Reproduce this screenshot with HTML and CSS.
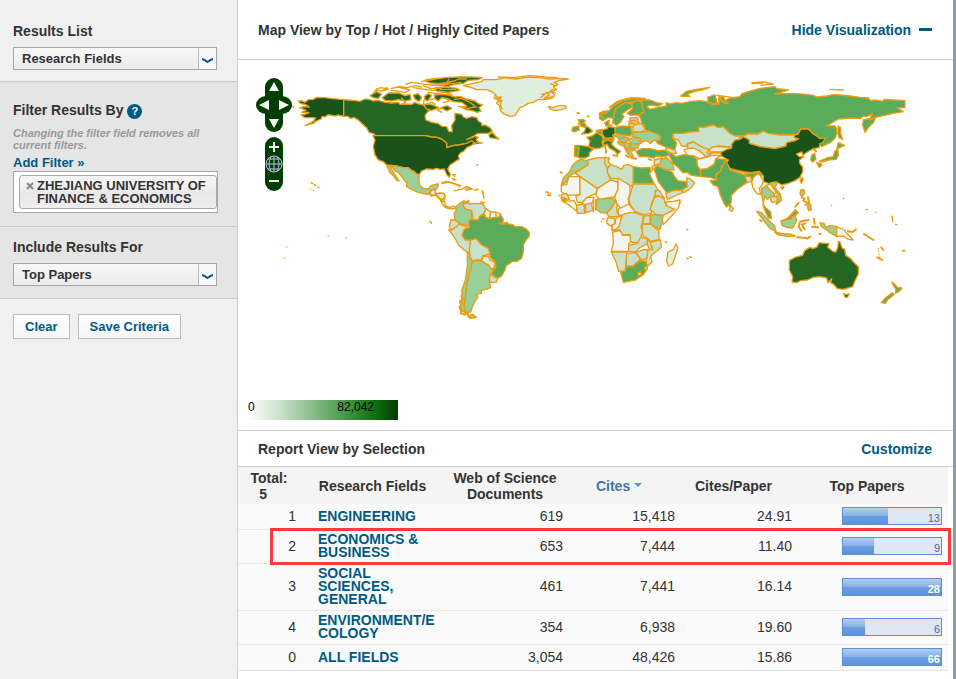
FILE: index.html
```html
<!DOCTYPE html>
<html lang="en">
<head>
    <meta charset="UTF-8">
    <meta name="viewport" content="width=device-width, initial-scale=1.0">
    <title>Top Papers by Research Field</title>
    <link rel="stylesheet" href="styles.css">
</head>
<body>
    <div class="page">
        <aside class="sidebar">
            <section class="panel">
                <label class="panel-title" for="resultsList">Results List</label>
                <div class="select-box">
                    <select id="resultsList"><option>Research Fields</option></select>
                    <svg class="chevron" viewBox="0 0 11 6"><path d="M0 1Q2 1.500 5.500 4Q9 1.500 11 1"/></svg>
                </div>
            </section>

            <section class="panel shaded filter">
                <h2 class="panel-title">Filter Results By <button class="help" aria-label="Help">?</button></h2>
                <p class="note">Changing the filter field removes all current filters.</p>
                <a class="add-filter" href="#">Add Filter »</a>
                <div class="filter-list">
                    <div class="tag">
                        <button class="remove" aria-label="Remove filter"><svg viewBox="0 0 8 8"><path d="M1 1L7 7M7 1L1 7"/></svg></button>
                        <span>ZHEJIANG UNIVERSITY OF FINANCE &amp; ECONOMICS</span>
                    </div>
                </div>
            </section>

            <section class="panel shaded include">
                <label class="panel-title" for="includeFor">Include Results For</label>
                <div class="select-box">
                    <select id="includeFor"><option>Top Papers</option></select>
                    <svg class="chevron" viewBox="0 0 11 6"><path d="M0 1Q2 1.500 5.500 4Q9 1.500 11 1"/></svg>
                </div>
            </section>

            <div class="actions">
                <button class="btn">Clear</button>
                <button class="btn">Save Criteria</button>
            </div>
        </aside>

        <main class="content">
            <header class="view-header">
                <h1>Map View by Top / Hot / Highly Cited Papers</h1>
                <a class="hide-link" href="#">Hide Visualization <span class="minus"></span></a>
            </header>

            <div class="map">
                <svg class="world" viewBox="238 60 715 370" role="img" aria-label="World map">
                    <!-- North America -->
                    <g class="land" transform="translate(245 65) scale(.3333)">
                        <path class="l7" d="M160 108L172 108L180 112L190 104L205 103L215 97L240 98L262 101L296 104V154L280 150L270 153L250 149L240 156L232 154L228 162L216 167L205 175L180 182L198 173L207 167L212 159L200 158L180 158L168 150L186 146L192 142L170 142L183 136L165 128L176 125L193 126L182 119L166 115Z"/>
                        <path class="l6" d="M296 104L330 107L345 109L360 102L375 104L385 108L400 106L420 112L440 114L460 112L465 118L480 117L500 118L510 112L518 116L535 120L548 119L560 124L565 130L548 140L540 152L542 165L560 172L580 176L590 184L605 185L612 200L622 200L620 182L630 165V145L650 148L655 156L665 160L680 155L695 158L700 168L710 174V182L720 180L735 188L742 198L730 205L710 205L697 206L685 214L665 224L690 214L700 217L693 224L701 232L690 236L680 228L665 235L640 240L625 242L605 248V235L590 222L575 217L560 216L540 212H393L385 206L372 202L365 188L352 177L340 165L328 158L316 160L308 154L296 154Z"/>
                        <path class="l6" d="M732 210L742 202L752 214L762 222L748 220L734 218ZM678 240L700 232L712 234"/>
                        <path class="l7" d="M393 212H540L560 216L575 217L590 222L605 235V248L625 242L640 240L665 235L680 228L688 234L678 242L665 248L655 260L648 262L640 272L643 282L635 287L615 300L608 312L616 328L613 337L606 330L598 312L585 313L575 310L565 313L545 312L530 318L522 330L514 326L505 318L500 317L490 308L475 308L450 302L425 300L415 290L400 285L390 270L385 245L390 225L384 212Z"/>
                        <path class="l4" d="M440 304L450 302L475 308L490 308L500 317L505 318L514 326L522 330V350L526 364L535 370L550 372L558 362L580 356L578 368L570 375L555 376L553 386L545 388L520 382L500 373L485 365V354L474 340L460 322L450 318Z"/>
                        <path class="l4" d="M425 300L437 304L443 320L455 336L462 348L455 346L445 332L434 322Z"/>
                        <path class="l2" d="M553 388L560 377L568 376L572 388L560 394ZM570 390L585 384L598 386L600 400L594 414L584 402Z"/>
                        <path d="M385 85L395 72L408 68L430 72L410 78L395 76M410 78L425 68M440 70L460 66L495 75L480 82L440 76M460 64L485 68L512 62L530 66M482 58L500 52L540 58L560 60L600 62M505 68L530 72L565 76L600 73M530 50L545 44L580 40L600 44L620 38L640 40"/>
                        <path class="l6" d="M375 92L395 80L410 88L400 100L385 98ZM412 98L430 84L462 84L480 92L495 88L498 104L480 108L460 104L440 108L420 106ZM505 90L520 86L530 98L522 110L510 102ZM538 94L550 86L560 92L548 108L540 104ZM535 118L558 118L582 128L560 136L545 132Z"/>
                        <path class="l6" d="M540 48L570 42L600 38L640 36L680 36L712 38L700 44L670 46L655 55L630 58L610 64L590 62L615 52L580 56L555 54ZM570 68L600 66L635 70L645 76L610 82L575 78Z"/>
                        <path class="l6" d="M568 90L590 88L612 90L630 96L645 94L665 102L690 108L700 116L712 120L702 128L708 138L696 142L680 136L662 134L650 126L666 124L650 112L625 110L610 102L590 98L580 108L570 102ZM588 128L606 122L620 130L606 138Z"/>
                        <path d="M550 82L575 86L600 82L620 88M560 62L605 58L648 52M585 74L632 73M595 113L612 108L604 100M628 103L651 100L678 114L694 127M537 106L535 121L548 116L561 112L570 118"/>
                        <path d="M535 62L556 70L590 70M612 42L606 52L628 48L640 42L664 42M640 124L668 130L690 126M470 100L482 112L470 118M590 142L576 134L590 130M556 104L570 100"/>
                        <path d="M590 354L605 349L625 355L648 362M655 370L665 364L682 372L668 374M638 373H646M694 373H700M624 330L630 334M622 340L628 346M712 378L715 392M198 353L204 356M208 359L211 361M218 366L222 368M140 122L146 126M697 300H698"/>
                    </g>

                    <!-- Greenland and Iceland -->
                    <g class="land" transform="translate(430 65) scale(.3333)">
                        <path class="l2" d="M100 62L130 55L155 50L160 44L200 44L225 38L260 42L290 36L330 38L360 42L385 40L415 42L390 46L372 52L384 58L370 66L380 74L366 80L374 92L366 100L345 104L325 104L310 112L295 115L280 124L270 128L262 140L255 152L240 154L222 147L212 138L208 122L200 115L205 104L192 100L198 90L185 80L170 74L140 74L118 66Z"/>
                        <path d="M205 36L250 38L300 32L345 36L380 38M200 100L214 96L206 110L216 106L210 118L216 132M332 98L350 82L358 90L342 100L366 96M335 88L368 80M362 56L378 64M372 72L360 78L376 84M195 92L208 100"/>
                        <path class="l2" d="M355 124L370 128L385 122L405 122L410 128L395 134L375 136L360 132Z"/>
                        <path d="M442 144H446M473 153H476M141 300H142M350 380L356 384M354 388L362 391M391 321L395 324"/>
                    </g>

                    <!-- South and Central America -->
                    <g class="land" transform="translate(380 150) scale(.3333)">
                        <path class="l2" d="M150 128L158 118L166 122L165 136L152 134ZM168 130L190 130L196 138L186 150L176 142ZM182 152L194 156L196 168L210 172L222 168L228 176L218 176L206 176L196 172L186 160Z"/>
                        <path class="l4" d="M228 170L240 160L252 153L250 166L256 177L275 182V205L267 212L268 228L250 224L240 222L225 210L222 190L228 182Z"/>
                        <path class="l3" d="M252 158L265 155L268 162L290 160L310 162L318 178L310 192L295 208L280 210L275 182L256 177L250 166Z"/>
                        <path class="l1" d="M318 176L332 186L328 206L318 202L312 190ZM332 186L348 186V202L330 204ZM348 186L362 192L356 202L348 202Z"/>
                        <path class="l5" d="M267 212L275 208L280 210L295 210L298 200L310 192L318 204L330 206L345 202L356 202L362 194L370 208L368 218L385 222L400 225L405 230L425 230L440 238L448 248V258L438 270L430 285V305L425 325L412 334L398 334L378 348L375 360L365 378L352 385L332 370L348 350L345 335L330 322V310L325 295L305 285L285 268L270 270L255 270L247 258L246 250L252 240L268 232Z"/>
                        <path class="l3" d="M212 210L225 210L240 222L230 230L215 240L208 230Z"/>
                        <path class="l3" d="M206 238L215 240L230 230L236 222L262 232L252 240L246 255L255 270L270 270L272 285L268 310L250 298L235 285L225 265Z"/>
                        <path class="l3" d="M272 270L288 266L305 285L325 295L330 312L308 318L304 330L285 330L278 334L270 320L268 300Z"/>
                        <path class="l2" d="M308 320L325 318L330 330L345 338L342 355L330 358L325 345L306 334Z"/>
                        <path class="l4" d="M278 334L300 332L325 345L335 358L348 350L332 372L328 395L332 412L320 418L304 420V430L290 432L294 442L284 455L278 468L272 486L255 488L252 465L256 440L260 405L266 372Z"/>
                        <path class="l4" d="M262 308L268 310L272 332L276 338L268 370L260 405L256 440L252 465L255 488L240 480L245 455L246 420L256 390L262 350Z"/>
                        <path class="l3" d="M330 374L352 385L350 396L334 398L328 392Z"/>
                        <path class="knot" d="M240 452L246 462L238 472L246 480L242 490L254 494L262 488L266 500L276 494L288 502L270 504M358 220L372 222L382 218M244 438L250 448L240 458M252 154L258 160L266 152"/>
                        <path d="M188 100L205 96L225 102L240 110M245 118L255 113L272 118L256 120M222 122H232M283 120H290M218 74H226M220 86L228 90M307 122L310 130M311 138L312 146M302 156L314 158M150 214L155 220M498 126L504 128M502 136H510M536 137H540M292 46H293"/>
                    </g>

                    <!-- Europe, Russia and western Asia -->
                    <g class="land" transform="translate(550 70) scale(.3333)">
                        <path class="l5" d="M275 90L300 90L320 98L338 101L325 108L300 105L290 110L300 118L325 112L350 108L348 98L360 102L380 98L395 100L420 95L450 92L470 95L475 98L473 82L495 74L500 92L498 104L508 102L506 84L520 78L525 92L540 84L570 80L575 72L592 66L630 55L675 50L680 56L715 60L690 68L675 72L730 70L765 73L790 76L800 81L830 78L850 74L870 75L900 78L930 82L955 84L962 92L975 90L1000 94L1002 88L1065 92V112L1042 114L1060 125L1030 130L1000 137L977 142L970 158L957 170L945 187L938 165L940 150L960 145L968 130L950 140L940 138L932 145L900 144L865 147L850 156L830 168L855 168L860 175L861 190L855 205L840 218L815 230L808 222L825 205L810 206L795 195L775 177H752L745 192L730 195L690 195L655 190L640 183L625 190L595 192L575 198L555 198L540 190L520 170L505 173L490 165L465 171L445 172L447 184L420 186L400 190H370L368 205L380 218L375 238L350 232L325 222L318 214L332 208L328 195L295 185L285 178L283 166L275 160L272 145L265 135L282 125L275 105Z"/>
                        <path class="l5" d="M392 78L410 64L440 58L480 52L455 60L435 64L412 72L420 80Z"/>
                        <path class="l3" d="M370 190H400L420 186L447 184L445 172L465 171L490 165L505 173L520 170L540 190L555 198L575 198L560 215L545 232L510 228L490 230L478 240L458 232L430 216L412 222L410 230L395 228L385 210L368 205Z"/>
                        <path class="l3" d="M412 222L430 216L458 232L478 240L470 248L484 254L468 260L448 242L430 234L414 236Z"/>
                        <path class="l0" d="M402 240L414 236L430 234L448 242L468 260L450 266L430 258L412 256Z"/>
                        <path class="l2" d="M478 238L490 230L545 232L518 246L480 246ZM476 250L510 248L514 258L488 260Z"/>
                        <path class="l0" d="M440 268L468 262L486 256L514 256L498 266L492 284L472 296L450 298L442 288Z"/>
                        <path class="l5" d="M350 248L364 250L378 260L402 254L430 258L440 268L442 288L450 300L454 320L425 316L412 308L398 308L384 292L368 280L362 264Z"/>
                        <path class="l5" d="M450 300L472 296L492 284L498 266L528 268L534 282L516 288L512 304L498 312L500 328L480 322L454 320Z"/>
                        <path class="l5" d="M500 330L498 314L512 304L520 284L526 272L535 280L540 300L580 312L625 308L640 305L634 318L605 328L580 345L562 358L545 375L543 400L530 411L524 404L510 372L504 350L490 345L480 332Z"/>
                        <path class="l3" d="M542 298L552 296L590 310L582 314L560 306ZM585 318L602 320L606 334L592 338Z"/>
                        <path class="l5" d="M258 244L275 236L300 236L325 242L350 240L358 256L340 260L318 258L312 264L290 260L268 260Z"/>
                        <path class="l3" d="M348 232L375 240L380 250L364 250L348 242Z"/>
                        <path class="l5" d="M148 130L160 124L178 122L190 108L205 98L225 90L250 84L285 88L275 93L262 90L248 96L228 98L212 106L196 118L190 145L175 142L158 152L149 146Z"/>
                        <path class="l5" d="M190 145L196 118L212 106L228 98L246 102V112L232 120L216 132L222 140L212 156L200 166L188 158Z"/>
                        <path class="l5" d="M246 100L262 90L275 98L276 112L282 125L265 135L240 136L232 130L248 116Z"/>
                        <path class="knot" d="M180 112L198 98L218 90L245 84L285 86M190 106L212 95M150 136L160 142M154 130L170 128"/>
                        <path class="l5" d="M164 158L178 150L176 164L186 166L168 168Z"/>
                        <path class="l3" d="M240 144L262 142L265 150L240 152ZM236 154L262 152L268 158L248 160ZM236 160L254 162L250 172L238 168Z"/>
                        <path class="l3" d="M250 168L258 164L275 160L286 178L276 186L248 184Z"/>
                        <path class="l4" d="M246 188L276 186L295 183L328 195L332 208L312 212L300 220L290 212L276 216L268 204L246 200Z"/>
                        <path class="l5" d="M196 172L215 168L242 170L246 190L240 198L215 194L195 190Z"/>
                        <path class="l4" d="M190 196L212 193L228 198L210 206ZM206 208L232 202L238 208L226 216L208 214ZM232 206L262 203L274 220L245 222ZM240 222L268 222L264 234L244 236ZM222 216L238 220L240 234L230 236L224 226ZM202 216L220 216L224 230L210 224Z"/>
                        <path class="l4" d="M228 240L248 236L256 240L240 244L248 254L250 262L238 258Z"/>
                        <path class="l6" d="M156 180L172 176L174 170L194 172L196 190L188 196L192 203L166 206L156 192Z"/>
                        <path class="l5" d="M140 186L156 180V194L140 190ZM158 206L192 204L190 212L162 214Z"/>
                        <path class="l65" d="M110 202L126 198L140 188L156 198L160 206L156 216L160 230L150 234L136 236L116 230L120 212Z"/>
                        <path class="l65" d="M74 228L90 226L116 230L130 238L118 248V258L105 264L90 264L74 258Z"/>
                        <path class="l5" d="M75 232L88 233L84 258L74 260Z"/>
                        <path class="l65" d="M160 216L172 210L190 214L184 222L196 234L212 244L202 254L196 244L178 234L172 224L160 226Z"/>
                        <path class="l5" d="M84 150L98 148L106 152L100 158L108 164L104 172L92 168L90 158ZM68 172L86 168L88 180L72 186L66 182Z"/>
                        <path class="l6" d="M108 168L118 174L128 184L116 190L94 192L104 184L106 176Z"/>
                        <path class="knot" d="M166 228V234M168 240V248M190 256L202 258M228 256L236 262M244 264L258 266M296 268L304 270M224 232L234 250M86 160L92 164M140 182L152 180"/>
                        <path d="M82 128L88 130M112 139L116 141M606 39L640 36L670 42L632 46M840 58L880 60M32 307H36"/>
                    </g>

                    <!-- East Asia -->
                    <g class="land" transform="translate(680 70) scale(.3333)">
                        <path class="l3" d="M185 200L205 192H235L250 183L265 190L300 195H340L355 206L345 212L320 218L318 228L285 236L240 230L208 220V210Z"/>
                        <path class="l7" d="M122 247L140 238L155 234V222L165 210L180 208L190 200L208 210V220L240 230L285 236L318 228L320 218L345 212L356 206L342 203L344 196L355 192L362 177H385L398 190L410 198L420 206L436 204L428 218L420 221L418 232L400 237L385 244L368 256L366 246L350 252L358 260L372 260L358 270L360 282L368 290V305L360 322L345 332L325 340L305 345L290 336L270 342L250 335V318L238 304L212 308L190 305L165 300L150 295L140 278L145 270L124 258Z"/>
                        <path class="l7" d="M302 352L312 350L308 358Z"/>
                        <path class="l5" d="M395 256L404 250L408 268L398 276L392 270ZM475 168L481 172L482 192L488 208L478 204L474 190ZM475 218L494 226L480 232L470 238ZM474 240L475 256L468 268L445 270L425 276L418 274L440 264L460 260L464 244ZM410 278L420 280L426 286L418 292Z"/>
                        <path class="l5" d="M366 322L370 328L364 340L360 332Z"/>
                        <path class="knot" d="M408 244L400 236M570 150L584 142M218 40L248 38M85 96L100 104L116 98M118 80L125 94L145 100"/>
                        <path d="M110 76L140 80L166 84"/>
                    </g>

                    <!-- Africa and the Middle East -->
                    <g class="land" transform="translate(550 150) scale(.3333)">
                        <path class="l5" d="M312 56L322 48L340 56L366 66L374 80L384 92L412 96V112L394 120L370 122L350 128L338 112L325 95Z"/>
                        <path class="l4" d="M326 44L338 26L350 22L368 42L372 60L345 58L322 48Z"/>
                        <path class="l3" d="M312 30L336 24L330 42L314 46ZM306 50L314 46L320 50L308 60Z"/>
                        <path class="l3" d="M347 130L370 122L394 120L398 128L375 138L352 148ZM410 84L420 86L434 98L424 114L402 128L396 120L412 110Z"/>
                        <path class="l4" d="M80 34L92 28L112 32L115 44L96 56L75 68L58 78L48 98L34 104L40 84L60 64L66 48Z"/>
                        <path class="l3" d="M112 30L140 24L165 22L164 36L172 50L175 72L182 90L142 116L90 80L75 70L96 56L115 44Z"/>
                        <path class="l3" d="M165 22L178 24L175 36L182 44L172 56L164 38Z"/>
                        <path class="l3" d="M182 44L200 50L215 58L222 46L235 44L250 50V108L240 108L200 86L182 86L172 66L172 56Z"/>
                        <path class="l5" d="M250 50L275 54L300 52L304 64L298 70L312 100H250Z"/>
                        <path class="l0" d="M34 106L50 104L56 80L90 80V134L52 136L34 126Z"/>
                        <path class="l2" d="M90 80L142 116L138 130L112 142L96 158L82 156L78 138L90 134Z"/>
                        <path class="l0" d="M142 116L182 90L204 96V118L194 140L148 148L138 136Z"/>
                        <path class="l0" d="M204 84L240 106V130L234 148L238 162L212 176L200 160L194 140L204 118Z"/>
                        <path class="l3" d="M250 102H314L324 120L312 142L302 172L305 190L280 194L254 184L240 162L236 148L242 128Z"/>
                        <path class="l3" d="M314 142L328 138L342 148L348 166L374 178L346 196L318 194L300 178Z"/>
                        <path class="l3" d="M316 122L328 122L344 146L328 138L316 138Z"/>
                        <path class="l0" d="M346 156L370 154L390 150L386 172L365 198L340 224L336 208L340 196L374 178L352 168Z"/>
                        <path class="l4" d="M302 194L318 194L338 198L336 220L330 238L302 222Z"/>
                        <path class="l3" d="M282 198L300 196V220L278 222Z"/>
                        <path class="l4" d="M140 148L190 145L196 156L180 176L170 190L152 188L138 176Z"/>
                        <path class="l3" d="M196 152L202 166L200 180L206 200L176 200L170 188L184 176Z"/>
                        <path class="l0" d="M204 178L236 162L256 186L230 192L206 198Z"/>
                        <path class="l2" d="M172 204H192L196 220L180 228L170 218Z"/>
                        <path class="l0" d="M198 204L214 198L212 224L200 240L186 238L184 228L196 220Z"/>
                        <path class="l3" d="M218 194L240 188L256 188L280 198L276 222L278 250L272 262V280L242 276L240 254L216 254L210 240L192 242L206 230Z"/>
                        <path class="l0" d="M188 246L210 242L218 256L240 256L242 276L236 282V304L184 304L190 278Z"/>
                        <path class="l3" d="M236 286L262 280L272 262L292 266L294 280L270 292L258 306L236 304Z"/>
                        <path class="l3" d="M276 224L302 222L326 242L328 268L302 274L290 264L278 256Z"/>
                        <path class="l3" d="M300 276L332 270L334 292L302 318L306 336L294 348L286 340L292 318L288 300L304 296Z"/>
                        <path class="l3" d="M292 266L300 276L308 296L300 300L292 284Z"/>
                        <path class="l3" d="M184 306L232 306L228 338L226 362L206 364L198 336Z"/>
                        <path class="l3" d="M230 310L256 308L272 328L248 348H228Z"/>
                        <path class="l3" d="M258 308L282 298L294 302L290 326L274 330Z"/>
                        <path class="l5" d="M212 366L226 364L228 350L246 350L272 332L288 334L292 356L280 374L256 390L220 397Z"/>
                        <path class="l1" d="M264 368L272 366L274 374L264 376ZM284 350H292V358H284Z"/>
                        <path class="l2" d="M378 282L384 294L368 342L356 348L350 334L354 306L370 298Z"/>
                        <path class="l3" d="M34 134L50 130L58 148L36 150ZM78 166L102 162L104 190L82 190ZM106 160L124 158L128 182L108 188Z"/>
                        <path class="l1" d="M38 154L72 152L80 166V184L56 164ZM96 158L112 142L132 142L128 158L104 164Z"/>
                        <path class="knot" d="M34 144L48 146M36 150L46 152"/>
                        <path d="M130 150V186M136 150V180M186 240L198 242M304 286L308 300M274 226V236"/>
                        <path d="M32 67H36M0 130H2M154 214L156 216M158 207H162M186 228V240M346 275L350 278M411 239H413M411 325L414 326M420 321L424 322"/>
                    </g>

                    <!-- South-east Asia and Oceania -->
                    <g class="land" transform="translate(680 160) scale(.3333)">
                        <path class="l0" d="M215 66L222 50L236 40L250 60L246 76L238 84L242 104L230 100L218 82Z"/>
                        <path class="l4" d="M244 86L258 78L270 92L284 98L282 108L268 112L262 118L254 108L250 130L246 110Z"/>
                        <path class="l1" d="M258 76L272 72L290 98L284 102L270 90Z"/>
                        <path class="l3" d="M270 112L290 108L292 124L276 128Z"/>
                        <path class="l4" d="M272 68L288 66L290 74L284 82L302 104L304 122L288 134L294 118V104L280 84Z"/>
                        <path class="l5" d="M248 132L258 144L272 156L274 176L264 172L254 150Z"/>
                        <path class="l4" d="M230 154L244 158L262 176L284 198L288 214L270 206L250 180Z"/>
                        <path class="l4" d="M284 216L304 220L330 222L346 228L325 230L292 224Z"/>
                        <path class="l4" d="M303 182L318 180L346 150L354 158L346 168L350 182L338 204L320 202L306 196Z"/>
                        <path class="l5" d="M310 180L328 172L346 150L354 158L340 168L330 178Z"/>
                        <path class="l3" d="M150 134L160 146L156 154L148 150Z"/>
                        <path class="l4" d="M362 90L372 88L374 100L366 110L360 102ZM382 140L392 134L394 150L386 152Z"/>
                        <path class="knot" d="M356 128L346 140M366 112L374 116L370 122L382 128M384 112L388 132L376 134M364 184L386 180M360 186L356 200L364 212M366 194L374 208M366 194L376 190M402 176L404 192M396 200L414 202M352 232L378 234M382 236L390 230M240 180L244 184M418 222H422"/>
                        <path class="l4" d="M420 188L432 190L438 202L450 196L470 200V230L450 218L438 208L424 200Z"/>
                        <path class="l0" d="M470 200L494 210L500 220L520 240L504 238L490 228L470 230Z"/>
                        <path class="knot" d="M504 214L518 216L528 208M552 222L560 226M564 230L580 240M604 262L610 270M592 292L606 300M668 272H674"/>
                        <path class="l6" d="M328 302L345 292L368 286L374 272L390 262L398 266L410 262L418 248L432 250L447 250L443 262L458 274L468 276L474 260L475 244L480 246L486 264L494 268L497 286L512 296L524 310L535 320V342L526 360L518 380L505 384L490 388L472 386L462 374L452 368L455 356L444 368L440 354L420 350L400 352L382 360L362 362L350 368L336 366L338 350L328 330Z"/>
                        <path class="l7" d="M490 400L498 404L508 401L502 412L496 412Z"/>
                        <path class="l5" d="M636 366L646 374L652 382L666 384L658 394L646 400L648 388L640 376ZM638 398L642 404L624 418L616 430L604 428L616 414Z"/>
                        <path d="M454 136H455M489 115L491 116M559 148L562 149M586 157H587M637 168L638 184M647 193L651 194M0 124V130M22 209H23M21 296H23M31 291L34 292"/>
                    </g>

                    <!-- stray Pacific islands -->
                    <g class="land dots">
                        <path d="M286 247h1M284 258h1M328 236h1M346 238h1M310 189l5 2M430 222h2M878 248l2 10"/>
                    </g>

                    <!-- pan and zoom control -->
                    <g class="control">
                        <rect x="265" y="78" width="18" height="54" rx="9"/>
                        <ellipse cx="266" cy="105" rx="10" ry="9"/>
                        <ellipse cx="282" cy="105" rx="10" ry="9"/>
                        <rect x="265" y="137" width="18" height="54" rx="9"/>
                        <path class="arrows" d="M274 82L279 91H269ZM274 128L279 119H269ZM259 105L269 100V110ZM289 105L279 100V110Z"/>
                        <path class="signs" d="M269 147H279M274 142V152M269 181H279"/>
                        <g class="globe">
                            <circle cx="274" cy="164" r="8"/>
                            <path d="M266 164H282M268 159H280M268 169H280M274 156V172M271 157Q267 164 271 171M277 157Q281 164 277 171"/>
                        </g>
                    </g>
                </svg>
                <div class="legend"><span>0</span><span>82,042</span></div>
            </div>

            <header class="view-header report-header">
                <h2>Report View by Selection</h2>
                <a href="#">Customize</a>
            </header>

            <table class="report">
                <colgroup>
                    <col class="col-rank"><col class="col-field"><col class="col-docs"><col class="col-cites"><col class="col-ratio"><col>
                </colgroup>
                <thead>
                    <tr>
                        <th>Total:<br>5&nbsp;&nbsp;&nbsp;</th>
                        <th>Research Fields</th>
                        <th>Web of Science<br>Documents</th>
                        <th class="sorted">Cites <span class="arrow"></span></th>
                        <th class="ratio">Cites/Paper</th>
                        <th class="top">Top Papers</th>
                    </tr>
                </thead>
                <tbody>
                    <tr>
                        <td>1</td><td><a href="#">ENGINEERING</a></td><td>619</td><td>15,418</td><td>24.91</td>
                        <td><div class="bar"><div class="fill" style="width: 46%"></div><span>13</span></div></td>
                    </tr>
                    <tr class="highlight">
                        <td>2</td><td><a href="#">ECONOMICS &amp; BUSINESS</a></td><td>653</td><td>7,444</td><td>11.40</td>
                        <td><div class="bar"><div class="fill" style="width: 32%"></div><span>9</span></div></td>
                    </tr>
                    <tr>
                        <td>3</td><td><a href="#">SOCIAL SCIENCES, GENERAL</a></td><td>461</td><td>7,441</td><td>16.14</td>
                        <td><div class="bar full"><div class="fill" style="width: 100%"></div><span>28</span></div></td>
                    </tr>
                    <tr>
                        <td>4</td><td><a href="#">ENVIRONMENT/E<br>COLOGY</a></td><td>354</td><td>6,938</td><td>19.60</td>
                        <td><div class="bar"><div class="fill" style="width: 22%"></div><span>6</span></div></td>
                    </tr>
                    <tr>
                        <td>0</td><td><a href="#">ALL FIELDS</a></td><td>3,054</td><td>48,426</td><td>15.86</td>
                        <td><div class="bar full"><div class="fill" style="width: 100%"></div><span>66</span></div></td>
                    </tr>
                </tbody>
            </table>
        </main>
    </div>
</body>
</html>
```

FILE: styles.css
```css
/* Global Styles */
* {
    box-sizing: border-box;
}

body {
    margin: 0;
    font-family: "Liberation Sans", Arial, sans-serif;
    font-size: 14px;
    color: #333;
    background: #8f9ba5;
}

h1, h2, p {
    margin: 0;
}

a {
    color: #005a84;
    font-weight: bold;
    text-decoration: none;
}

button, select {
    font-family: inherit;
}

.page {
    display: flex;
    min-height: 100vh;
    margin-right: 3px;
    background: #fff;
}

/* Sidebar */
.sidebar {
    flex: 0 0 238px;
    background: #f0f0f0;
    border-right: 1px solid #d0d0d0;
}

.panel {
    padding: 22px 20px 11px 13px;
    border-bottom: 1px solid #ccc;
}

.shaded {
    background: #e5e5e5;
}

.filter {
    padding: 19px 19px 13px 13px;
}

.include {
    padding-top: 11px;
    padding-bottom: 12px;
}

.panel-title {
    display: block;
    font-size: 14px;
    font-weight: bold;
    line-height: 18px;
}

.help {
    width: 15px;
    height: 15px;
    padding: 0;
    border: none;
    border-radius: 50%;
    background: #005a84;
    color: #fff;
    font-size: 11px;
    font-weight: bold;
    line-height: 15px;
}

.note {
    margin: 8px 0 4px;
    color: #999;
    font-size: 11px;
    font-style: italic;
    font-weight: bold;
    line-height: 12px;
}

.add-filter {
    display: block;
    font-size: 13px;
    line-height: 16px;
}

.select-box {
    position: relative;
    margin-top: 7px;
}

.select-box select {
    appearance: none;
    display: block;
    width: 100%;
    height: 23px;
    padding: 0 24px 0 8px;
    border: 1px solid #a6a6a6;
    border-radius: 0;
    background: linear-gradient(90deg, transparent calc(100% - 18px), #bbb calc(100% - 18px), #bbb calc(100% - 17px), #f8f8f8 calc(100% - 17px)), linear-gradient(#f8f8f8, #ebebeb);
    color: #333;
    font-size: 13px;
    font-weight: bold;
}

.chevron {
    position: absolute;
    right: 4px;
    top: 11px;
    width: 11px;
    height: 6px;
    fill: none;
    stroke: #005a84;
    stroke-width: 2;
    pointer-events: none;
}

.filter-list {
    padding: 3px 0 3px 5px;
    border: 1px solid #a6a6a6;
    background: #fff;
}

.tag {
    display: flex;
    gap: 3px;
    padding: 3px 3px 3px 6px;
    border: 1px solid #aaa;
    border-radius: 3px;
    background: linear-gradient(#f4f4f4 20%, #e8e8e8 55%, #eee);
    font-size: 13px;
    font-weight: bold;
    line-height: 13px;
}

.tag span {
    flex: 1;
}

.remove {
    align-self: flex-start;
    width: 8px;
    height: 13px;
    padding: 0;
    border: none;
    background: none;
}

.remove svg {
    display: block;
    width: 8px;
    stroke: #888;
    stroke-width: 2;
}

.actions {
    display: flex;
    gap: 8px;
    padding: 15px 13px;
}

.btn {
    height: 25px;
    padding: 0 11px;
    border: 1px solid #bbb;
    background: linear-gradient(#fff, #f6f6f6);
    color: #005a84;
    font-size: 13px;
    font-weight: bold;
}

/* Main Content */
.content {
    flex: 1;
    min-width: 0;
}

.view-header {
    display: flex;
    justify-content: space-between;
    align-items: center;
    height: 60px;
    padding: 0 21px 0 20px;
    border-bottom: 1px solid #ccc;
}

.view-header h1,
.view-header h2 {
    font-size: 14px;
}

.report-header {
    height: 37px;
    border-top: 1px solid #ccc;
}

.minus {
    display: inline-block;
    width: 13px;
    height: 3px;
    margin-left: 4px;
    background: #005a84;
    vertical-align: 4px;
}

/* Map */
.map {
    position: relative;
}

.world {
    display: block;
    width: 100%;
}

.land path {
    fill: none;
    stroke: #ec9c10;
    stroke-width: 4;
    stroke-linejoin: round;
    stroke-linecap: round;
}

.land .knot {
    stroke-width: 6;
}

.dots path {
    stroke-width: 1;
    stroke-dasharray: 1 2;
}

.land .l0 { fill: #f5f6f4; }
.land .l1 { fill: #eff6ee; }
.land .l2 { fill: #dfefdf; }
.land .l3 { fill: #c8e1c8; }
.land .l4 { fill: #99cf99; }
.land .l5 { fill: #5aab5a; }
.land .l65 { fill: #368236; }
.land .l6 { fill: #256625; }
.land .l7 { fill: #1a5319; }

.control {
    fill: #003f00;
}

.arrows {
    fill: #fff;
}

.signs {
    stroke: #fff;
    stroke-width: 2;
}

.globe {
    fill: none;
    stroke: #b9b9e8;
    stroke-width: 1;
}

.legend {
    position: absolute;
    left: 10px;
    bottom: 10px;
    display: flex;
    justify-content: space-between;
    width: 150px;
    height: 20px;
    padding-right: 24px;
    background: linear-gradient(90deg, #fff, #cfe3cf 20%, #55a055 60%, #107510 83%, #003c00);
    color: #000;
    font-size: 12px;
    line-height: 14px;
}

/* Report Table */
.report {
    width: calc(100% - 5px);
    border-collapse: collapse;
    table-layout: fixed;
}

.col-rank { width: 62px; }
.col-field { width: 145px; }
.col-docs { width: 120px; }
.col-cites { width: 112px; }
.col-ratio { width: 117px; }

.report th {
    height: 37px;
    padding: 0;
    background: #f4f4f4;
    line-height: 16px;
}

.report .ratio {
    padding-right: 4px;
}

.report .top {
    padding-right: 8px;
}

.report .sorted {
    padding-right: 4px;
    color: #4672a8;
}

.arrow {
    display: inline-block;
    border: 4px solid transparent;
    border-top-color: #5b91d9;
    border-bottom: none;
    vertical-align: 4px;
}

.report td {
    padding: 3px 2px 4px;
    border-bottom: 1px solid #e8e8e8;
    background: #fafafa;
    line-height: 13px;
    text-align: right;
}

.report td:first-child {
    padding-right: 4px;
}

.report td:nth-child(2) {
    padding-left: 18px;
    text-align: left;
}

.report td:last-child {
    padding-right: 6px;
}

.highlight {
    position: relative;
}

/* Red frame around the selected row */
.highlight td:first-child::after {
    content: "";
    position: absolute;
    top: -2px;
    right: -3px;
    bottom: -1px;
    left: 32px;
    border: 3px solid #fa3c3c;
    pointer-events: none;
}

.bar {
    position: relative;
    width: 100px;
    height: 18px;
    margin-left: auto;
    border: 1px solid #5b8fd6;
    background: #dfe7f3;
    color: #4a6a94;
    font-size: 11px;
    line-height: 20px;
}

.fill {
    height: 100%;
    background: linear-gradient(#b4cef0, #85b0e6 50%, #6d9fdf 50%, #5b93da);
}

.bar span {
    position: absolute;
    top: 0;
    right: 1px;
}

.full {
    color: #fff;
    font-weight: bold;
}
```
